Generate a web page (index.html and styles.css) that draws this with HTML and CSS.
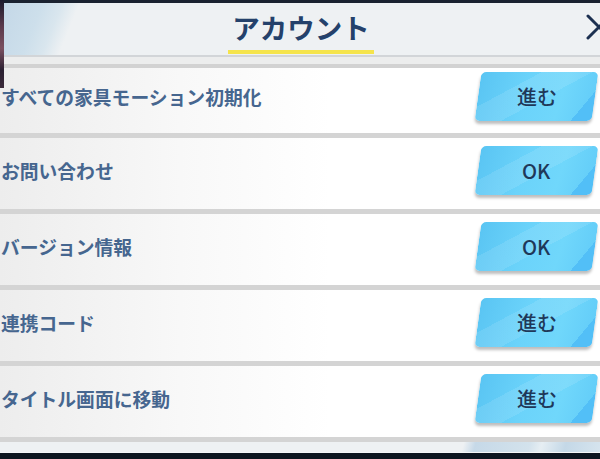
FILE: index.html
```html
<!DOCTYPE html>
<html lang="ja">
<head>
<meta charset="utf-8">
<title>アカウント</title>
<link rel="stylesheet" href="styles.css">
</head>
<body>
<div class="screen">
  <div class="topline"></div>
  <header class="header">
    <h1 class="title">アカウント</h1>
  </header>
  <div class="header-base"></div>
  <ul class="list">
    <li class="row row-first">
      <span class="label">すべての家具モーション初期化</span>
      <button class="btn"><span class="btn-text">進む</span></button>
    </li>
    <li class="row">
      <span class="label">お問い合わせ</span>
      <button class="btn"><span class="btn-text">OK</span></button>
    </li>
    <li class="row">
      <span class="label">バージョン情報</span>
      <button class="btn"><span class="btn-text">OK</span></button>
    </li>
    <li class="row">
      <span class="label">連携コード</span>
      <button class="btn"><span class="btn-text">進む</span></button>
    </li>
    <li class="row">
      <span class="label">タイトル画面に移動</span>
      <button class="btn"><span class="btn-text">進む</span></button>
    </li>
  </ul>
  <div class="footer-strip"></div>
  <div class="bottom-dark"></div>

  <div class="side-art"></div>
  <svg class="close" width="26" height="26" viewBox="0 0 26 26" aria-label="閉じる">
    <path d="M2 2 L24 24 M2 24 L24 2" stroke="#1c3050" stroke-width="3" stroke-linecap="round" fill="none"/>
  </svg>
</div>
</body>
</html>
```

FILE: styles.css
```css
* { box-sizing: border-box; }

html, body {
  margin: 0;
  padding: 0;
  background: #0e1620;
}

.screen {
  position: relative;
  width: 600px;
  height: 459px;
  overflow: hidden;
  display: flex;
  flex-direction: column;
  font-family: "Noto Sans CJK JP", "Noto Sans", sans-serif;
}

.topline {
  height: 3px;
  flex: none;
  background: #1a2230;
}

.header {
  height: 52px;
  flex: none;
  display: flex;
  justify-content: center;
  align-items: flex-end;
  background:
    linear-gradient(112deg, #c3d7e7 0, #cddfeb 40px, #d9e6ee 58px, #eef1f3 74px, #eef1f3 100%);
}

.title {
  margin: 0 0 1px 2px;
  padding: 0 4px 5px;
  font-size: 27.5px;
  line-height: 36px;
  font-weight: 700;
  color: #24416b;
  border-bottom: 4px solid #f5e44c;
  letter-spacing: 0;
}

.header-base {
  height: 13px;
  flex: none;
  background: linear-gradient(#d2d5d8 0, #d2d5d8 2px, #eceded 2px, #eceded 9px, #d2d2d2 9px, #d2d2d2 13px);
}

.list {
  list-style: none;
  margin: 0;
  padding: 0;
  flex: none;
}

.row {
  height: 76px;
  display: flex;
  align-items: center;
  justify-content: space-between;
  padding-bottom: 6px;
  border-bottom: 5px solid #d4d4d4;
  background: linear-gradient(90deg, #ededed 0%, #f8f8f8 30%, #ffffff 55%, #ffffff 100%);
}

.row-first {
  height: 70px;
  padding-bottom: 9px;
}

.label {
  font-size: 18.8px;
  font-weight: 700;
  color: #46668f;
  padding-left: 1px;
  white-space: nowrap;
}

.btn {
  width: 117px;
  height: 49px;
  margin-right: 5px;
  border: none;
  border-radius: 5px;
  transform: skewX(-8deg);
  display: flex;
  align-items: center;
  justify-content: center;
  padding: 0;
  background:
    linear-gradient(150deg, transparent 0 30%, rgba(255,255,255,0.10) 30% 55%, transparent 55%),
    linear-gradient(125deg, transparent 0 86%, #52bff7 86% 100%),
    linear-gradient(100deg, #5ac5f3 0%, #6bd3fa 40%, #70d7fb 70%, #62ccf8 100%);
  box-shadow: 0 3px 3px rgba(0, 0, 0, 0.26);
}

.btn-text {
  transform: skewX(8deg);
  font-family: "Noto Sans CJK JP", "Noto Sans", sans-serif;
  font-size: 20px;
  font-weight: 500;
  color: #1f3859;
  line-height: 1;
}

.footer-strip {
  height: 11px;
  flex: none;
  background: linear-gradient(105deg, #eef1f3 0, #eef1f3 77%, #c6d9e8 79%, #d3e2ec 88%, #e6eef3 90%, #c4d8e7 94%, #d6e4ee 100%);
  border-bottom: 1px solid #f4f6f8;
}

.bottom-dark {
  flex: 1;
  background: #0c1520;
}

.side-art {
  position: absolute;
  left: 0;
  top: 0;
  width: 4px;
  height: 88px;
  background: linear-gradient(#1b1a2c 0%, #5a3a4c 30%, #7a5060 55%, #2a2032 80%, #3b2a3a 100%);
}

.close {
  position: absolute;
  left: 586px;
  top: 14px;
}
```
